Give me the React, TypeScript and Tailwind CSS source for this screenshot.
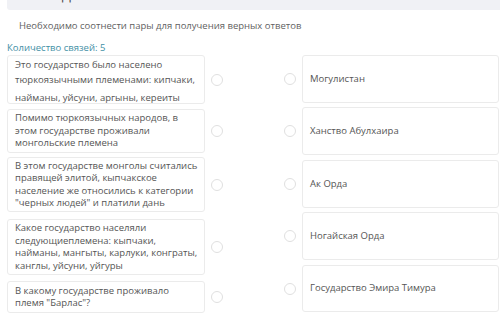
const leftItems = [
  {
    lines: ["Это государство было населено", "тюркоязычными племенами: кипчаки,"],
    extra: "найманы, уйсуни, аргыны, кереиты",
    h: "h-[49px]",
    mt: "mt-0",
  },
  {
    lines: ["Помимо тюркоязычных народов, в", "этом государстве проживали", "монгольские племена"],
    h: "h-[44px]",
    mt: "mt-[5px]",
  },
  {
    lines: [
      "В этом государстве монголы считались",
      "правящей элитой, кыпчакское",
      "население же относились к категории",
      "\"черных людей\" и платили дань",
    ],
    h: "h-[55px]",
    mt: "mt-[4px]",
  },
  {
    lines: [
      "Какое государство населяли",
      "следующиеплемена: кыпчаки,",
      "найманы, мангыты, карлуки, конграты,",
      "канглы, уйсуни, уйгуры",
    ],
    h: "h-[56px]",
    mt: "mt-[7px]",
  },
  {
    lines: ["В какому государстве проживало", "племя \"Барлас\"?"],
    h: "h-[32px]",
    mt: "mt-[6px]",
  },
];

const rightItems = [
  { text: "Могулистан", mt: "mt-0", h: "h-[48px]" },
  { text: "Ханство Абулхаира", mt: "mt-[4px]", h: "h-[48px]" },
  { text: "Ак Орда", mt: "mt-[5px]", h: "h-[48px]" },
  { text: "Ногайская Орда", mt: "mt-[4px]", h: "h-[48px]" },
  { text: "Государство Эмира Тимура", mt: "mt-[5px]", h: "h-[47px]" },
];

function Radio() {
  return (
    <span className="block h-[12px] w-[12px] shrink-0 rounded-full border-[1.5px] border-[#e0e0e0] bg-white" />
  );
}

export default function App() {
  return (
    <div className="h-[319px] w-[500px] overflow-hidden bg-white font-['Open_Sans',sans-serif] text-[#555]">
      {/* top bar, title scrolled out of view */}
      <div className="ml-[7px] h-[10px] overflow-hidden rounded-bl-[3px] bg-[#f0f1f5]">
        <div className="ml-[55px] mt-[-13px] text-[13px] leading-[16px] text-[#444]">Д</div>
      </div>

      <p className="ml-[19px] mt-[10px] text-[9.5px] leading-[12px] text-[#5f5f5f]">
        Необходимо соотнести пары для получения верных ответов
      </p>

      <p className="ml-[7px] mt-[10px] text-[9.5px] leading-[12px] text-[#3f8fa5]">Количество связей: 5</p>

      <div className="mt-[1px] flex pl-[7px]">
        {/* left column */}
        <div className="flex w-[216px] flex-col">
          {leftItems.map((item, i) => (
            <div key={i} className={`flex items-center ${item.mt}`}>
              <div
                className={`${item.h} w-[198px] shrink-0 rounded-[3px] border border-[#ebebeb] bg-white px-[7px] ${
                  item.extra ? "pt-[1px]" : "flex flex-col justify-center"
                }`}
              >
                <div className={`whitespace-nowrap text-[9.5px] ${item.extra ? "leading-[15px]" : "leading-[12.5px]"}`}>
                  {item.lines.map((l) => (
                    <div key={l}>{l}</div>
                  ))}
                  {item.extra && <div className="mt-[3px]">{item.extra}</div>}
                </div>
              </div>
              <div className="ml-[6px]">
                <Radio />
              </div>
            </div>
          ))}
        </div>

        {/* right column */}
        <div className="ml-[61px] flex flex-1 flex-col">
          {rightItems.map((item) => (
            <div key={item.text} className={`flex items-center ${item.mt}`}>
              <Radio />
              <div
                className={`${item.h} ml-[6px] flex w-[197px] items-center rounded-[3px] border border-[#ebebeb] bg-white px-[7px] text-[9.5px] whitespace-nowrap`}
              >
                {item.text}
              </div>
            </div>
          ))}
        </div>
      </div>
    </div>
  );
}
